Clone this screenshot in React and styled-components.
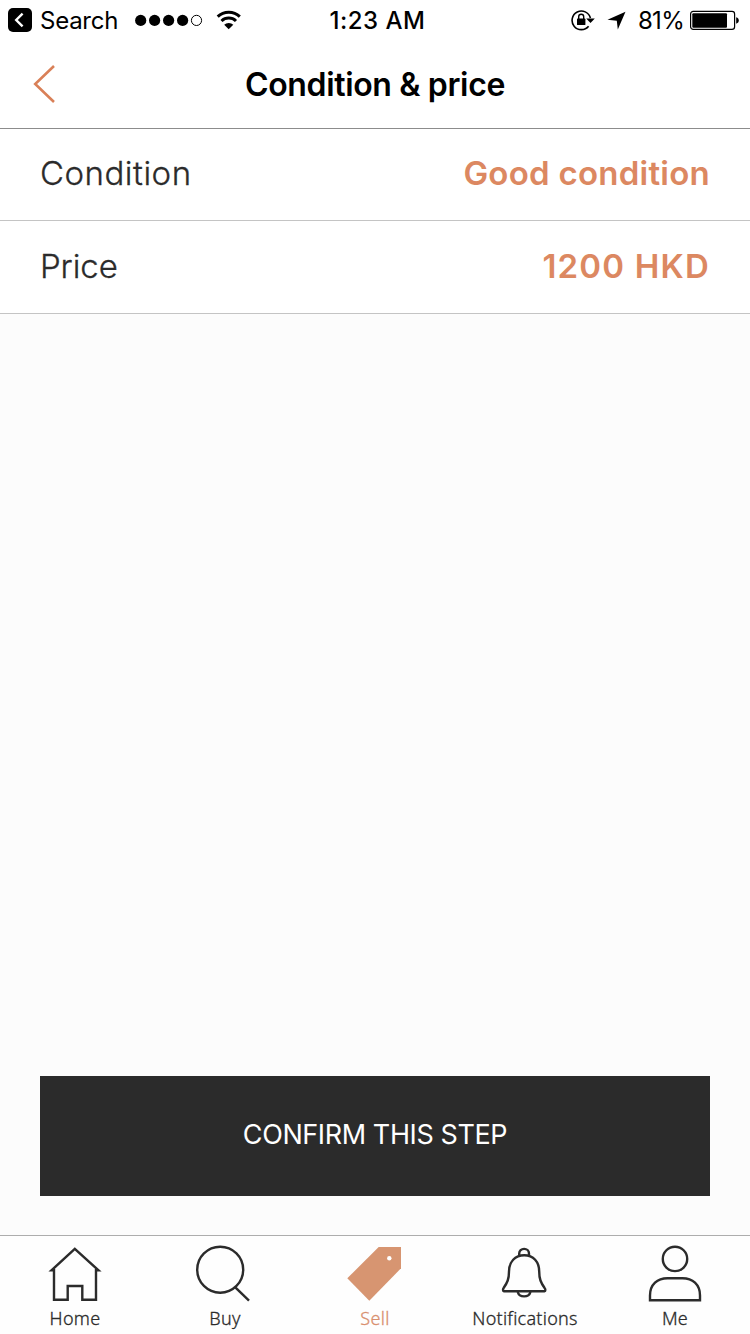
import React, { Component } from 'react'
import styled, { createGlobalStyle } from 'styled-components'

const GlobalStyle = createGlobalStyle`
* { box-sizing: border-box; }
body { margin: 0; }
`

const AppRoot = styled.div`
display: flex;
flex-direction: column;
width: 750px;
height: 1334px;
overflow: hidden;
background-color: #fcfcfc;
color: #2b2b2b;
font-family: Inter, 'Liberation Sans', sans-serif;
`

const StatusBar = styled.div`
display: grid;
grid-template-columns: 1fr auto 1fr;
align-items: center;
height: 40px;
padding: 0 11px 0 8px;
background-color: #fff;
color: #000;
`

const StatusGroup = styled.div`
display: flex;
align-items: center;
justify-content: ${props => props.$end ? 'flex-end' : 'flex-start'};
`

const StatusText = styled.span`
padding-top: 2px;
font-size: 24px;
line-height: 38px;
white-space: nowrap;
font-weight: ${props => props.$weight || 400};
letter-spacing: ${props => props.$spacing || 0}px;
margin-left: ${props => props.$left || 0}px;
`

const StatusIcon = styled.svg`
display: block;
flex: none;
margin-left: ${props => props.$left || 0}px;
`

const Header = styled.header`
display: grid;
grid-template-columns: 90px 1fr 90px;
align-items: center;
height: 89px;
background-color: #fff;
border-bottom: 1px solid #8c8c8c;
`

const BackButton = styled.button`
display: flex;
padding: 0 0 0 30px;
border: 0;
background: none;
`

const Title = styled.h1`
margin: 0;
color: #000;
font-size: 32px;
font-weight: 600;
letter-spacing: -0.35px;
text-align: center;
`

const Row = styled.div`
display: flex;
justify-content: space-between;
align-items: center;
height: ${props => props.$height}px;
padding: 0 40px 3px;
background-color: #fff;
border-bottom: 1px solid #c4c4c4;
`

const Label = styled.span`
font-size: 33px;
font-weight: 300;
-webkit-text-stroke: 0.3px;
letter-spacing: ${props => props.$spacing}px;
`

const Value = styled.span`
color: #dc8861;
font-size: 33px;
font-weight: 600;
letter-spacing: ${props => props.$spacing}px;
`

const Content = styled.main`
display: flex;
flex: 1;
flex-direction: column;
justify-content: flex-end;
padding: 0 40px 39px;
`

const ConfirmButton = styled.button`
height: 120px;
padding: 0 0 3px;
border: 0;
background-color: #2b2b2b;
color: #fff;
font-family: inherit;
font-size: 27px;
font-weight: 400;
letter-spacing: -0.4px;
`

const TabBar = styled.nav`
display: grid;
grid-template-columns: repeat(5, 1fr);
height: 99px;
background-color: #fefefe;
border-top: 1px solid #adadad;
`

const Tab = styled.a`
display: flex;
flex-direction: column;
align-items: center;
padding-top: 6px;
color: ${props => props.$active ? '#d9906f' : '#2b2b2b'};
`

const TabIcon = styled.svg`
display: block;
fill: none;
stroke: #2b2b2b;
stroke-width: 2.4;
`

const TabLabel = styled.span`
font-family: 'Noto Sans', sans-serif;
font-size: 18px;
line-height: 24px;
letter-spacing: ${props => props.$spacing || 0}px;
font-weight: 300;
-webkit-text-stroke: 0.3px;
`

const HomeIcon = () => (
  <TabIcon width="64" height="64" viewBox="0 0 64 64">
    <path d="M11 57.7V28.3H8.5L31.8 6.8L55.5 28.3H53V57.7H39.3V44H24.7V57.7Z" />
  </TabIcon>
)

const SearchIcon = () => (
  <TabIcon width="64" height="64" viewBox="0 0 64 64">
    <circle cx="27.2" cy="27.7" r="23" />
    <path d="M42.3 45.3L56 58.7" />
  </TabIcon>
)

const TagIcon = () => (
  <TabIcon width="64" height="64" viewBox="0 0 64 64">
    <path d="M35.7 5H58V26.3L26.3 58.7L4.3 36.3Z" fill="#d79571" stroke="none" />
    <circle cx="46.3" cy="16.3" r="2.2" fill="#fff" stroke="none" />
  </TabIcon>
)

const BellIcon = () => (
  <TabIcon width="64" height="64" viewBox="0 0 64 64">
    <path d="M26.2 13.5V11.5A4.9 4.6 0 0 1 36 11.5V13.5" />
    <path d="M10.8 49.3C9.8 49.3 9.8 47 10.6 46C14.4 40.5 16 37 16 29.5C16 20 22 13.2 31.2 13.2S46.2 20 46.2 29.5C46.2 37 47.8 40.5 51.6 46C52.6 47 52.6 49.3 51.6 49.3Z" />
    <path d="M24.7 50A6.6 5.8 0 0 0 37.5 50" />
  </TabIcon>
)

const PersonIcon = () => (
  <TabIcon width="64" height="64" viewBox="0 0 64 64">
    <circle cx="32" cy="16.9" r="12.2" />
    <path d="M7 58.3V53.5C7 42.5 14.5 36.2 24.5 36.2H39.5C49.5 36.2 57 42.5 57 53.5V58.3Z" />
  </TabIcon>
)

const tabs = [
  { name: 'Home', icon: HomeIcon, spacing: 0.3 },
  { name: 'Buy', icon: SearchIcon, spacing: 0.3 },
  { name: 'Sell', icon: TagIcon, spacing: 0.3, active: true },
  { name: 'Notifications', icon: BellIcon, spacing: 0.25 },
  { name: 'Me', icon: PersonIcon, spacing: 0.2 },
]

class App extends Component {

  render() {
    return (
      <AppRoot>
        <GlobalStyle />
        <StatusBar>
          <StatusGroup>
            <StatusIcon width="24" height="24" viewBox="0 0 24 24">
              <rect width="24" height="24" rx="5" fill="#000" />
              <path d="M14.6 5.6L8.2 12L14.6 18.4" fill="none" stroke="#fff" strokeWidth="2.4" />
            </StatusIcon>
            <StatusText $left={8} $spacing={-0.25}>Search</StatusText>
            <StatusIcon $left={17} width="68" height="12" viewBox="0 0 68 12">
              <circle cx="5.7" cy="6.4" r="5.6" />
              <circle cx="19.6" cy="6.4" r="5.6" />
              <circle cx="33.6" cy="6.4" r="5.6" />
              <circle cx="47.6" cy="6.4" r="5.6" />
              <circle cx="61.5" cy="6.4" r="5.1" fill="none" stroke="#000" />
            </StatusIcon>
            <StatusIcon $left={13} width="26" height="20" viewBox="0 0 26 20">
              <path d="M1.7 6.6A16 16 0 0 1 23.8 6.6M5.5 11A10.5 10.5 0 0 1 20 11" fill="none" stroke="#000" strokeWidth="3" />
              <path d="M8.2 14.8A6.4 6.4 0 0 1 17.3 14.8L12.7 19.2Z" />
            </StatusIcon>
          </StatusGroup>
          <StatusText $weight={500} $left={8} $spacing={0.5}>1:23 AM</StatusText>
          <StatusGroup $end>
            <StatusIcon width="24" height="22" viewBox="0 0 24 22">
              <path d="M17.6 17.2A9.3 9.3 0 1 1 19.4 9" fill="none" stroke="#000" strokeWidth="1.6" />
              <path d="M15.2 9.4H23.8L19.5 14Z" />
              <rect x="6" y="9.6" width="8.4" height="6.5" rx="0.6" />
              <path d="M7.7 10V7.8A2.5 2.5 0 0 1 12.7 7.8V10" fill="none" stroke="#000" strokeWidth="1.4" />
            </StatusIcon>
            <StatusIcon $left={12} width="19" height="20" viewBox="0 0 19 20">
              <path d="M18.5 1.8L10.8 19.4L9.8 10.8L0.5 9.8Z" />
            </StatusIcon>
            <StatusText $left={12} $spacing={-0.7}>81%</StatusText>
            <StatusIcon $left={6} width="49" height="20" viewBox="0 0 49 20">
              <rect x="0.6" y="1.4" width="44" height="18" rx="2.6" fill="none" stroke="#000" strokeWidth="1.2" />
              <rect x="2.3" y="3.2" width="34.7" height="14.5" rx="1" />
              <path d="M46.2 7.3C48 8 48.8 9 48.8 10.5S48 13 46.2 13.7Z" />
            </StatusIcon>
          </StatusGroup>
        </StatusBar>
        <Header>
          <BackButton aria-label="Back">
            <svg width="30" height="40" viewBox="0 0 30 40">
              <path d="M24 2L5.2 20L24 38" fill="none" stroke="#d98058" strokeWidth="2.6" />
            </svg>
          </BackButton>
          <Title>Condition &amp; price</Title>
        </Header>
        <Row $height={92}>
          <Label $spacing={0.5}>Condition</Label>
          <Value $spacing={0.25}>Good condition</Value>
        </Row>
        <Row $height={93}>
          <Label $spacing={-0.1}>Price</Label>
          <Value $spacing={1.2}>1200 HKD</Value>
        </Row>
        <Content>
          <ConfirmButton>CONFIRM THIS STEP</ConfirmButton>
        </Content>
        <TabBar>
          {tabs.map(({ name, icon: Icon, spacing, active }) => (
            <Tab key={name} $active={active}>
              <Icon />
              <TabLabel $spacing={spacing}>{name}</TabLabel>
            </Tab>
          ))}
        </TabBar>
      </AppRoot>
    )
  }
}

export default App
